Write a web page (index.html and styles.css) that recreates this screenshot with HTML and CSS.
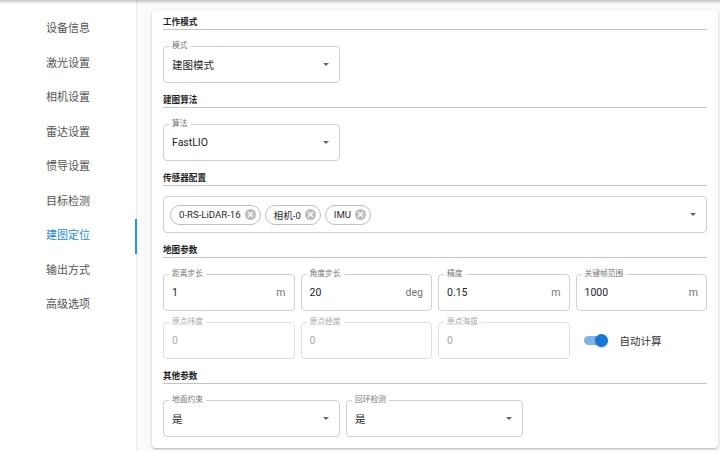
FILE: index.html
```html
<!DOCTYPE html>
<html lang="zh-CN">
<head>
<meta charset="utf-8">
<title>建图定位</title>
<link rel="stylesheet" href="styles.css">
</head>
<body>
<div class="app">
  <nav class="sidebar">
    <div class="nav-item">设备信息</div>
    <div class="nav-item">激光设置</div>
    <div class="nav-item">相机设置</div>
    <div class="nav-item">雷达设置</div>
    <div class="nav-item">惯导设置</div>
    <div class="nav-item">目标检测</div>
    <div class="nav-item active">建图定位</div>
    <div class="nav-item">输出方式</div>
    <div class="nav-item">高级选项</div>
  </nav>
  <main class="main">
    <div class="card">
      <section class="section first">
        <div class="section-title">工作模式</div>
        <div class="section-body">
          <div class="field select w177">
            <span class="label">模式</span>
            <span class="value">建图模式</span>
            <span class="arrow"></span>
          </div>
        </div>
      </section>
      <section class="section">
        <div class="section-title">建图算法</div>
        <div class="section-body">
          <div class="field select w177">
            <span class="label">算法</span>
            <span class="value">FastLIO</span>
            <span class="arrow"></span>
          </div>
        </div>
      </section>
      <section class="section">
        <div class="section-title">传感器配置</div>
        <div class="section-body">
          <div class="field select chips nolabel">
            <div class="chip-list">
              <span class="chip"><span class="chip-text">0-RS-LiDAR-16</span><span class="chip-del"><svg viewBox="0 0 12 12" width="11" height="11"><circle cx="6" cy="6" r="6" fill="#bdbdbd"/><path d="M3.8 3.8 L8.2 8.2 M8.2 3.8 L3.8 8.2" stroke="#fff" stroke-width="1.4" stroke-linecap="round"/></svg></span></span>
              <span class="chip"><span class="chip-text">相机-0</span><span class="chip-del"><svg viewBox="0 0 12 12" width="11" height="11"><circle cx="6" cy="6" r="6" fill="#bdbdbd"/><path d="M3.8 3.8 L8.2 8.2 M8.2 3.8 L3.8 8.2" stroke="#fff" stroke-width="1.4" stroke-linecap="round"/></svg></span></span>
              <span class="chip"><span class="chip-text">IMU</span><span class="chip-del"><svg viewBox="0 0 12 12" width="11" height="11"><circle cx="6" cy="6" r="6" fill="#bdbdbd"/><path d="M3.8 3.8 L8.2 8.2 M8.2 3.8 L3.8 8.2" stroke="#fff" stroke-width="1.4" stroke-linecap="round"/></svg></span></span>
            </div>
            <span class="arrow"></span>
          </div>
        </div>
      </section>
      <section class="section">
        <div class="section-title">地图参数</div>
        <div class="section-body grid4">
          <div class="field">
            <span class="label">距离步长</span>
            <span class="value">1</span>
            <span class="unit">m</span>
          </div>
          <div class="field">
            <span class="label">角度步长</span>
            <span class="value">20</span>
            <span class="unit">deg</span>
          </div>
          <div class="field">
            <span class="label">精度</span>
            <span class="value">0.15</span>
            <span class="unit">m</span>
          </div>
          <div class="field">
            <span class="label">关键帧范围</span>
            <span class="value">1000</span>
            <span class="unit">m</span>
          </div>
          <div class="field disabled">
            <span class="label">原点纬度</span>
            <span class="value">0</span>
          </div>
          <div class="field disabled">
            <span class="label">原点经度</span>
            <span class="value">0</span>
          </div>
          <div class="field disabled">
            <span class="label">原点海拔</span>
            <span class="value">0</span>
          </div>
          <div class="switch-cell">
            <span class="switch"><span class="track"></span><span class="thumb"></span></span>
            <span class="switch-label">自动计算</span>
          </div>
        </div>
      </section>
      <section class="section">
        <div class="section-title">其他参数</div>
        <div class="section-body row2">
          <div class="field select w177">
            <span class="label">地面约束</span>
            <span class="value">是</span>
            <span class="arrow"></span>
          </div>
          <div class="field select w177">
            <span class="label">回环检测</span>
            <span class="value">是</span>
            <span class="arrow"></span>
          </div>
        </div>
      </section>
    </div>
  </main>
</div>
</body>
</html>
```

FILE: styles.css
```css
* { box-sizing: border-box; }
html, body { margin: 0; padding: 0; }
body {
  width: 720px;
  height: 451px;
  overflow: hidden;
  background: #fafafa;
  font-family: "Roboto", "Noto Sans CJK SC", sans-serif;
  color: #222;
}
body::before {
  content: "";
  position: fixed;
  top: 0; left: 0; right: 0;
  height: 4px;
  background: linear-gradient(to bottom, rgba(0,0,0,0.22), rgba(0,0,0,0));
  z-index: 10;
}
.app {
  display: flex;
  height: 451px;
}
.sidebar {
  width: 137px;
  flex: none;
  background: #fff;
  border-right: 1px solid #ececec;
  padding-top: 12px;
}
.nav-item {
  height: 34.5px;
  line-height: 34.5px;
  padding-left: 46px;
  font-size: 11px;
  color: #555;
}
.nav-item.active {
  color: #1e88e5;
  box-shadow: inset -2px 0 0 #2196f3;
  margin-right: -1px;
}
.main {
  flex: 1;
  padding: 10px 2px 3px 15px;
  background: #fafafa;
}
.card {
  background: #fff;
  border-radius: 4px;
  box-shadow: 0 1px 3px rgba(0,0,0,0.22), 0 1px 1px rgba(0,0,0,0.08);
  padding: 5px 11px 11px 11px;
}
.section { margin-top: 10px; }
.section.first { margin-top: 0; }
.section-title {
  font-size: 8.6px;
  font-weight: 700;
  line-height: 14px;
  color: #1f1f1f;
  border-bottom: 1px solid #c4c4c4;
}
.section-body { padding-top: 10px; }
.field {
  position: relative;
  margin-top: 6px;
  height: 37px;
  border: 1px solid #cfcfcf;
  border-radius: 4px;
  display: flex;
  align-items: center;
  padding: 0 8px 0 8px;
}
.field.nolabel { margin-top: 0; }
.w177 { width: 177px; }
.label {
  position: absolute;
  top: -6px;
  left: 5px;
  padding: 0 3px;
  background: #fff;
  font-size: 7.75px;
  line-height: 10px;
  color: #777;
}
.value {
  flex: 1;
  font-size: 10.5px;
  color: #1e1e1e;
}
.unit {
  font-size: 10.5px;
  color: #757575;
}
.arrow {
  width: 0; height: 0;
  border-left: 3px solid transparent;
  border-right: 3px solid transparent;
  border-top: 3px solid #666;
  margin-right: 2px;
}
.field.select { padding-right: 8px; }
.field.disabled { border-color: #e0e0e0; }
.field.disabled .label { color: #a8a8a8; }
.field.disabled .value { color: #a8a8a8; }
.chips { padding-left: 6px; }
.chip-list {
  flex: 1;
  display: flex;
  gap: 4px;
}
.chip {
  display: inline-flex;
  align-items: center;
  height: 20px;
  border: 1px solid #bdbdbd;
  border-radius: 10px;
  padding: 0 4px 0 8px;
  background: #fff;
}
.chip-text {
  font-size: 9.6px;
  color: #2a2a2a;
}
.chip-del {
  display: inline-flex;
  margin-left: 4px;
}
.grid4 {
  display: grid;
  grid-template-columns: repeat(4, 1fr);
  column-gap: 6px;
  row-gap: 5px;
}
.switch-cell {
  margin-top: 6px;
  height: 37px;
  display: flex;
  align-items: center;
  padding-left: 8px;
}
.switch {
  position: relative;
  width: 24px;
  height: 14px;
  display: inline-block;
}
.track {
  position: absolute;
  left: 0; top: 2.5px;
  width: 22px; height: 9px;
  border-radius: 5px;
  background: #7fb5e6;
}
.thumb {
  position: absolute;
  left: 11px; top: 0;
  width: 13px; height: 13px;
  border-radius: 50%;
  background: #1976d2;
  box-shadow: 0 1px 2px rgba(0,0,0,0.25);
}
.switch-label {
  margin-left: 12px;
  font-size: 10.5px;
  color: #333;
}
.row2 {
  display: flex;
  gap: 6px;
}
```
